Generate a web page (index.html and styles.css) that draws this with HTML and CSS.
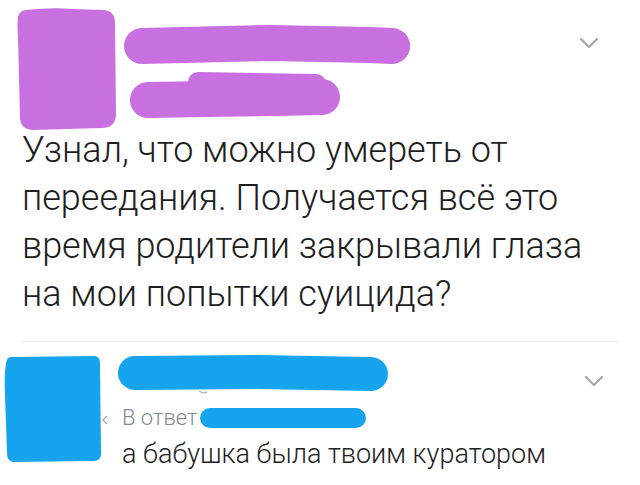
FILE: index.html
```html
<!DOCTYPE html>
<html lang="ru">
<head>
<meta charset="utf-8">
<title>Твит</title>
<link rel="stylesheet" href="styles.css">
</head>
<body>
<main class="feed">
  <article class="tweet">
    <header class="tweet-head">
      <svg class="avatar" width="106" height="124" viewBox="0 0 106 124">
        <path d="M12 3 Q40 0 58 2 L90 3 Q101 4 101 16 L102 108 Q101 121 88 121 L18 123 Q6 122 6 110 L4 30 Q3 18 4 10 Q6 3 12 3Z" fill="#c970e0"/>
      </svg>
      <div class="names">
        <svg class="name-bar" width="292" height="46" viewBox="0 0 292 46">
          <path d="M22 24 L150 21 L250 23 L272 24" stroke="#c970e0" stroke-width="36" stroke-linecap="round" stroke-linejoin="round" fill="none"/>
          <circle cx="274" cy="24" r="16" fill="#c970e0"/>
        </svg>
        <svg class="handle-bar" width="220" height="50" viewBox="0 0 220 50">
          <path d="M22 30 L80 29 L150 28 L196 27" stroke="#c970e0" stroke-width="36" stroke-linecap="round" fill="none"/>
          <path d="M72 12 L190 14" stroke="#c970e0" stroke-width="20" stroke-linecap="round" fill="none"/>
        </svg>
      </div>
      <svg class="chevron" width="20" height="13" viewBox="0 0 20 13">
        <path d="M2 2 L10 10 L18 2" stroke="#a3aab1" stroke-width="2.4" fill="none" stroke-linecap="round" stroke-linejoin="round"/>
      </svg>
    </header>
    <p class="tweet-text">Узнал, что можно умереть от<br>переедания. Получается всё это<br>время родители закрывали глаза<br>на мои попытки суицида?</p>
  </article>

  <hr class="divider">

  <article class="reply">
    <svg class="reply-avatar" width="100" height="108" viewBox="0 0 100 108">
      <path d="M8 2 L92 1 Q97 2 97 8 L98 100 Q97 106 90 106 L10 107 Q4 106 4 98 L2 40 Q1 20 3 8 Q4 2 8 2Z" fill="#17a4ee"/>
    </svg>
    <div class="reply-body">
      <svg class="reply-name" width="272" height="40" viewBox="0 0 272 40">
        <path d="M18 18 L140 17 L254 19" stroke="#17a4ee" stroke-width="34" stroke-linecap="round" fill="none"/>
        <path d="M82 36 Q86 39 90 37" stroke="#b8bcc0" stroke-width="1.4" fill="none"/>
      </svg>
      <div class="reply-to">
        <svg class="reply-arrow" width="8" height="10" viewBox="0 0 8 10">
          <path d="M6 1 L2 5 L6 9" stroke="#a0a4a8" stroke-width="1.2" fill="none"/>
        </svg>
        <span class="muted">В ответ</span>
        <svg class="reply-to-bar" width="168" height="22" viewBox="0 0 168 22">
          <path d="M11 11 L157 11" stroke="#17a4ee" stroke-width="20" stroke-linecap="round" fill="none"/>
        </svg>
      </div>
      <p class="reply-text">а бабушка была твоим куратором</p>
    </div>
    <svg class="chevron reply-chevron" width="20" height="13" viewBox="0 0 20 13">
      <path d="M2 2 L10 10 L18 2" stroke="#a3aab1" stroke-width="2.4" fill="none" stroke-linecap="round" stroke-linejoin="round"/>
    </svg>
  </article>
</main>
</body>
</html>
```

FILE: styles.css
```css
* {
  box-sizing: border-box;
}

html,
body {
  margin: 0;
  padding: 0;
  background: #ffffff;
}

.feed {
  width: 640px;
  height: 485px;
  overflow: hidden;
  font-family: Roboto, "Noto Sans", "DejaVu Sans", sans-serif;
  color: #1e1e1e;
}

.tweet-head {
  display: flex;
  align-items: flex-start;
  padding: 7px 0 0 14px;
  height: 126px;
}

.avatar {
  flex: none;
  display: block;
}

.names {
  display: flex;
  flex-direction: column;
  padding-top: 15px;
}

.name-bar,
.handle-bar {
  display: block;
}

.handle-bar {
  margin-left: 6px;
  margin-top: 2px;
}

.chevron {
  display: block;
  flex: none;
}

.tweet-head .chevron {
  margin-left: auto;
  margin-right: 41px;
  margin-top: 30px;
}

.tweet-text {
  margin: 0;
  padding-left: 22px;
  font-size: 36px;
  font-weight: 300;
  line-height: 48px;
}

.divider {
  border: 0;
  height: 1px;
  background: #e4e8eb;
  margin: 23px 22px 0 22px;
}

.reply {
  display: flex;
  align-items: flex-start;
  padding-top: 13px;
  padding-left: 3px;
}

.reply-avatar {
  display: block;
  flex: none;
}

.reply-body {
  display: flex;
  flex-direction: column;
  margin-left: 14px;
}

.reply-name {
  display: block;
}

.reply-to {
  display: flex;
  align-items: center;
  margin-top: 12px;
  margin-left: -16px;
  height: 22px;
}

.reply-arrow {
  display: block;
  margin-right: 13px;
  margin-top: 4px;
}

.muted {
  font-size: 22px;
  font-weight: 300;
  color: #85898e;
  line-height: 22px;
}

.reply-to-bar {
  display: block;
  margin-left: 2px;
}

.reply-text {
  margin: 8px 0 0 5px;
  font-size: 27px;
  font-weight: 300;
  line-height: 34px;
}

.reply-chevron {
  margin-left: auto;
  margin-right: 36px;
  margin-top: 20px;
}
```
